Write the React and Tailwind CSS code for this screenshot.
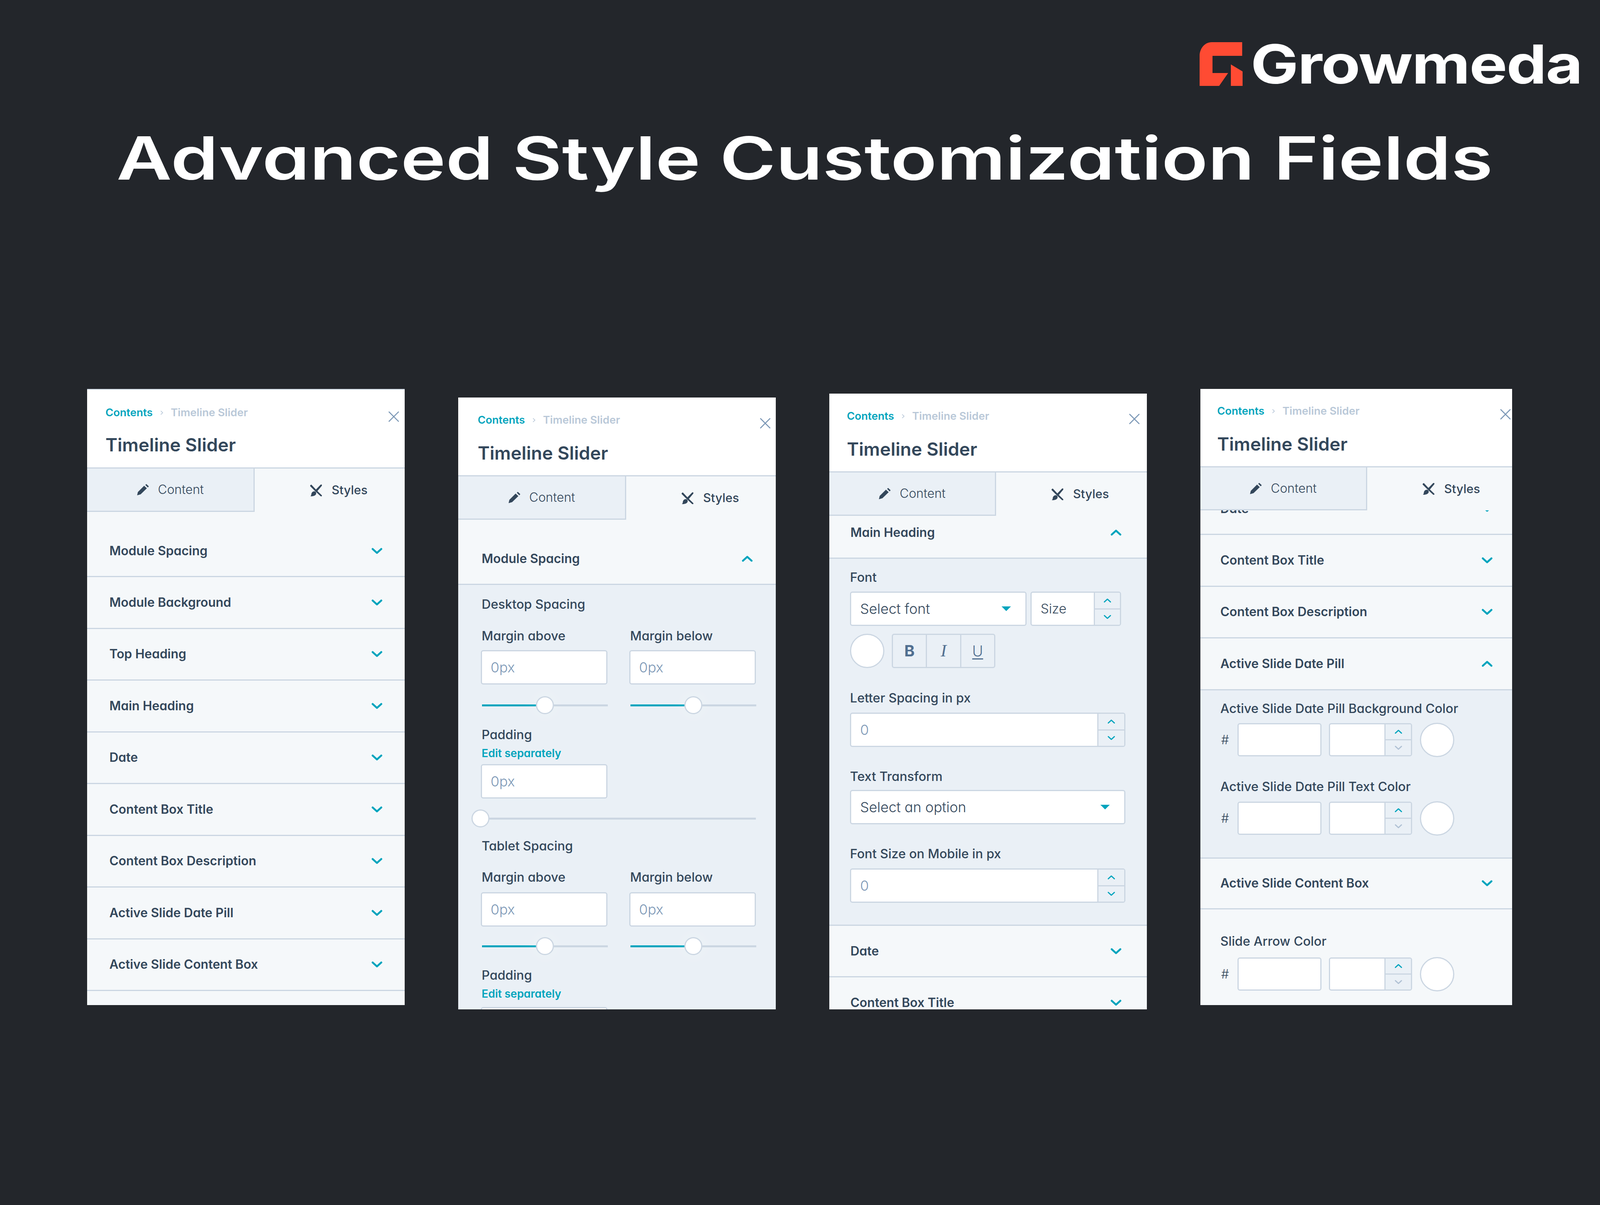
import React from "react";

const C = "[font-feature-settings:'cv11'] font-['Inter',sans-serif]";

function Chevron({ up = false, small = false, gray = false, className = "" }) {
  return (
    <svg
      viewBox="0 0 28 16"
      className={(small ? "w-[20px] h-[12px] " : "w-[28px] h-[16px] ") + className}
      fill="none"
      stroke={gray ? "#b0c1d4" : "#00a4bd"}
      strokeWidth={small ? 4 : 5}
      strokeLinecap="round"
      strokeLinejoin="round"
    >
      <polyline points={up ? "3,13 14,3 25,13" : "3,3 14,13 25,3"} />
    </svg>
  );
}

function Caret() {
  return (
    <svg viewBox="0 0 24 12" className="w-[24px] h-[12px]">
      <polygon points="0,0 24,0 12,12" fill="#00a4bd" />
    </svg>
  );
}

function Pencil() {
  return (
    <svg viewBox="0 0 32 30" className="w-[32px] h-[30px]" fill="#33475b">
      <path d="M1 29.500l2-8.500L19 5l7 6.500L10 27z" />
      <path d="M22 3l2.500-2.500L31 6.500l-2.500 3z" />
    </svg>
  );
}

function Cross() {
  return (
    <svg viewBox="0 0 32 32" className="w-[32px] h-[32px]" fill="#33475b">
      <path d="M1 3l3-2 14 15 13 12.500V31h-3L15 19 1 5z" />
      <path d="M28 1h3v3L17.500 20l-4-4z" />
      <path d="M10 18.500c3.500-1 7 1.500 6.500 5.500-.5 5-7.500 7.500-15 7 3-2 2-5 3-7.500 1-3 3-4.500 5.500-5z" />
    </svg>
  );
}

function Close({ pos }) {
  return (
    <svg viewBox="0 0 28 28" className={"absolute w-[28px] h-[28px] " + pos} fill="none" stroke="#7c98b6" strokeWidth="2.500" strokeLinecap="round">
      <path d="M2 2l24 24M26 2L2 26" />
    </svg>
  );
}

function Header({ hx, closePos, box, titleMt }) {
  return (
    <div className={"relative shrink-0 bg-white border-b-[3px] border-[#cbd6e2] " + hx + " " + box}>
      <div className="flex items-center h-[40px] text-[27.500px] font-semibold">
        <span className="text-[#00a4bd]">Contents</span>
        <svg viewBox="0 0 10 16" className="w-[8px] h-[14px] mx-[19px]" fill="none" stroke="#b0c1d4" strokeWidth="2"><path d="M2 2l6 6-6 6" /></svg>
        <span className="text-[#b9c8d8]">Timeline Slider</span>
      </div>
      <div className={"h-[60px] leading-[60px] text-[46.500px] font-semibold text-[#33475b] " + titleMt}>Timeline Slider</div>
      <Close pos={closePos} />
    </div>
  );
}

function Tabs({ w, h = "h-[111px]" }) {
  return (
    <div className={"flex shrink-0 bg-[#f5f8fa] " + h}>
      <div className={"flex items-center justify-center gap-[22px] bg-[#eaf0f6] border-r-[3px] border-b-[3px] border-[#cbd6e2] " + w}>
        <Pencil />
        <span className="text-[32px] font-light text-[#33475b]">Content</span>
      </div>
      <div className="flex items-center gap-[24px] pl-[141px]">
        <Cross />
        <span className="text-[31px] font-medium text-[#33475b]">Styles</span>
      </div>
    </div>
  );
}

function Row({ text, up = false, px, extra = "h-[132.500px]" }) {
  return (
    <div className={"flex items-center justify-between shrink-0 border-b-[3px] border-[#cbd6e2] bg-[#f5f8fa] " + px + " " + extra}>
      <span className="text-[32px] font-semibold text-[#33475b]">{text}</span>
      <Chevron up={up} />
    </div>
  );
}

function Label({ children, className = "" }) {
  return <div className={"h-[40px] leading-[40px] text-[32.500px] font-medium text-[#33475b] whitespace-nowrap " + className}>{children}</div>;
}

function Edit({ className = "" }) {
  return <div className={"h-[30px] leading-[30px] text-[28px] font-semibold text-[#00a4bd] " + className}>Edit separately</div>;
}

function PxInput({ className = "" }) {
  return (
    <div className={"flex items-center h-[88px] w-[324px] rounded-[6px] border-[3px] border-[#cbd6e2] bg-white pl-[22px] text-[36px] font-light text-[#7c98b6] " + className}>
      0px
    </div>
  );
}

function Slider({ className = "" }) {
  return (
    <div className={"flex items-center h-[46px] w-[322px] ml-[3px] " + className}>
      <div className="w-[138px] h-[5px] bg-[#00a4bd]" />
      <div className="w-[46px] h-[46px] rounded-full bg-white border-[3px] border-[#cbd6e2] shadow-[0_0_40px_14px_rgba(255,255,255,0.14)] shrink-0" />
      <div className="flex-1 h-[5px] bg-[#cbd6e2]" />
    </div>
  );
}

function ZeroSlider({ className = "" }) {
  return (
    <div className={"flex items-center h-[46px] -ml-[26px] " + className}>
      <div className="w-[46px] h-[46px] rounded-full bg-white border-[3px] border-[#cbd6e2] shrink-0" />
      <div className="flex-1 h-[5px] bg-[#cbd6e2]" />
    </div>
  );
}

function Spin({ w = "w-[67px]", gray = false }) {
  return (
    <div className={"flex flex-col h-full border-l-[3px] border-[#cbd6e2] " + w}>
      <div className="flex-1 flex items-center justify-center bg-[#eaf0f6] border-b-[3px] border-[#cbd6e2]">
        <Chevron up small />
      </div>
      <div className="flex-1 flex items-center justify-center bg-[#eaf0f6]">
        <Chevron small gray={gray} />
      </div>
    </div>
  );
}

function Select({ text, className }) {
  return (
    <div className={"flex items-center justify-between h-[88px] rounded-[6px] border-[3px] border-[#cbd6e2] bg-white pl-[23px] text-[36px] font-light text-[#33475b] " + className}>
      <span>{text}</span>
      <Caret />
    </div>
  );
}

function NumberInput({ className }) {
  return (
    <div className={"flex items-center h-[88px] w-[705px] rounded-[6px] border-[3px] border-[#cbd6e2] bg-white overflow-hidden " + className}>
      <span className="flex-1 pl-[23px] text-[36px] font-light text-[#7c98b6]">0</span>
      <Spin w="w-[69px]" />
    </div>
  );
}

function ColorRow({ className = "" }) {
  return (
    <div className={"flex items-center h-[88px] " + className}>
      <span className="w-[44px] pl-[2px] text-[32px] font-light text-[#33475b]">#</span>
      <div className="w-[215px] h-[85px] rounded-[6px] border-[3px] border-[#cbd6e2] bg-white" />
      <div className="ml-[19px] flex w-[213px] h-[85px] rounded-[6px] border-[3px] border-[#cbd6e2] bg-white overflow-hidden justify-end">
        <Spin w="w-[68px]" gray />
      </div>
      <div className="ml-[20px] w-[88px] h-[88px] rounded-full border-[3px] border-[#cbd6e2] bg-white" />
    </div>
  );
}

function Panel({ className, children }) {
  return <div className={"flex flex-col shrink-0 overflow-hidden bg-[#f5f8fa] " + C + " " + className}>{children}</div>;
}

const list1 = ["Top Heading", "Main Heading", "Date", "Content Box Title", "Content Box Description", "Active Slide Date Pill", "Active Slide Content Box"];

export default function App() {
  return (
    <div className="flex flex-col w-[4114px] h-[3086px] overflow-hidden bg-[#23262b]">
      <div className="flex justify-end items-center pt-[108px] pr-[64px] h-[220px]">
        <svg viewBox="0 0 110 112" className="w-[110px] h-[112px] mr-[153px]" fill="#ff4b33">
          <path d="M31 0H109V35H33V79H73L50 112H0V32C2 14 14 0 31 0Z" />
          <path d="M80 57L110 75V112H80Z" />
        </svg>
        <span className="font-['Inter',sans-serif] text-[138px] leading-[112px] font-bold tracking-[-2px] text-white origin-right scale-x-[1.185]">Growmeda</span>
      </div>
      <div className={"pl-[298px] mt-[90px] h-[190px] leading-[190px] text-[152px] font-semibold text-white whitespace-nowrap " + C}>
        <span className="inline-block origin-left scale-x-[1.283]">Advanced Style Customization Fields</span>
      </div>
      <div className="flex items-start gap-[137px] pl-[223px] mt-[496px]">
        {/* Panel 1 */}
        <Panel className="w-[813px] h-[1578px] border-t-[2px] border-[#cbd6e2]">
          <Header hx="pl-[47px]" box="h-[202px] pt-[39px]" titleMt="mt-[32px]" closePos="right-[14px] top-[55px]" />
          <Tabs w="w-[429px]" />
          <Row text="Module Spacing" px="px-[57px]" extra="h-[167px] pt-[36px]" />
          <Row text="Module Background" px="px-[57px]" />
          {list1.map((t) => (
            <Row key={t} text={t} px="px-[57px]" />
          ))}
        </Panel>

        {/* Panel 2 */}
        <Panel className="w-[813px] h-[1567px] mt-[22px]">
          <Header hx="pl-[50px]" box="h-[202px] pt-[38px]" titleMt="mt-[34px]" closePos="right-[13px] top-[52px]" />
          <Tabs w="w-[430px]" />
          <Row text="Module Spacing" up px="pl-[60px] pr-[59px]" extra="h-[167px] pt-[36px]" />
          <div className="flex-1 bg-[#eaf0f6] px-[60px] pt-[30px]">
            <Label>Desktop Spacing</Label>
            <div className="flex gap-[55px] -ml-[2px]">
              <div>
                <Label className="mt-[41px] ml-[2px]">Margin above</Label>
                <PxInput className="mt-[16px]" />
                <Slider className="mt-[30px]" />
              </div>
              <div>
                <Label className="mt-[41px] ml-[2px]">Margin below</Label>
                <PxInput className="mt-[16px]" />
                <Slider className="mt-[30px]" />
              </div>
            </div>
            <Label className="mt-[33px]">Padding</Label>
            <Edit className="mt-[12px]" />
            <PxInput className="mt-[13px] -ml-[2px]" />
            <ZeroSlider className="mt-[28px] mr-[-9px]" />
            <Label className="mt-[28px]">Tablet Spacing</Label>
            <div className="flex gap-[55px] -ml-[2px]">
              <div>
                <Label className="mt-[40px] ml-[2px]">Margin above</Label>
                <PxInput className="mt-[18px]" />
                <Slider className="mt-[27px]" />
              </div>
              <div>
                <Label className="mt-[40px] ml-[2px]">Margin below</Label>
                <PxInput className="mt-[18px]" />
                <Slider className="mt-[27px]" />
              </div>
            </div>
            <Label className="mt-[32px]">Padding</Label>
            <Edit className="mt-[12px]" />
            <PxInput className="mt-[19px] -ml-[2px]" />
          </div>
        </Panel>

        {/* Panel 3 */}
        <Panel className="w-[813px] h-[1577px] mt-[12px]">
          <Header hx="pl-[45px]" box="h-[202px] pt-[38px]" titleMt="mt-[34px]" closePos="right-[18px] top-[51px]" />
          <Tabs w="w-[427px]" />
          <Row text="Main Heading" up px="pl-[54px] pr-[65px]" extra="h-[110px] pb-[22px]" />
          <div className="bg-[#eaf0f6] px-[53px] pt-[28px] pb-[56px] border-b-[3px] border-[#cbd6e2]">
            <Label>Font</Label>
            <div className="flex gap-[10px] mt-[16px]">
              <Select text="Select font" className="w-[452px] pr-[37px]" />
              <div className="flex items-center w-[232px] h-[88px] rounded-[6px] border-[3px] border-[#cbd6e2] bg-white overflow-hidden">
                <span className="flex-1 pl-[23px] text-[33.500px] font-light text-[#33475b]">Size</span>
                <Spin />
              </div>
            </div>
            <div className="flex items-center gap-[19px] mt-[20px]">
              <div className="w-[88px] h-[88px] rounded-full bg-white border-[3px] border-[#cbd6e2]" />
              <div className="flex w-[265px] h-[88px] rounded-[6px] border-[3px] border-[#cbd6e2] text-[#516f90]">
                <div className="flex-1 flex items-center justify-center text-[40px] font-bold border-r-[3px] border-[#cbd6e2]">B</div>
                <div className="flex-1 flex items-center justify-center text-[44px] italic font-['Liberation_Serif',serif] border-r-[3px] border-[#cbd6e2]">I</div>
                <div className="flex-1 flex items-center justify-center text-[38px] font-light underline underline-offset-[5px]">U</div>
              </div>
            </div>
            <Label className="mt-[57px]">Letter Spacing in px</Label>
            <NumberInput className="mt-[17px]" />
            <Label className="mt-[56px]">Text Transform</Label>
            <Select text="Select an option" className="w-[705px] mt-[14px] pr-[37px]" />
            <Label className="mt-[56px]">Font Size on Mobile in px</Label>
            <NumberInput className="mt-[17px]" />
          </div>
          <Row text="Date" px="pl-[54px] pr-[65px]" extra="h-[132px]" />
          <Row text="Content Box Title" px="pl-[54px] pr-[65px]" />
        </Panel>

        {/* Panel 4 */}
        <Panel className="w-[798px] h-[1578px]">
          <Header hx="pl-[43px]" box="h-[201px] pt-[37px]" titleMt="mt-[34px]" closePos="right-[3px] top-[51px]" />
          <Tabs w="w-[427px]" h="h-[110px]" />
          <div className="flex flex-col flex-1 overflow-hidden">
            <Row text="Date" px="pl-[51px] pr-[50px]" extra="h-[132px] -mt-[69px]" />
            <Row text="Content Box Title" px="pl-[51px] pr-[50px]" />
            <Row text="Content Box Description" px="pl-[51px] pr-[50px]" />
            <Row text="Active Slide Date Pill" up px="pl-[51px] pr-[50px]" />
            <div className="bg-[#eaf0f6] pl-[51px] pt-[27px] pb-[56px] border-b-[3px] border-[#cbd6e2]">
              <Label>Active Slide Date Pill Background Color</Label>
              <ColorRow className="mt-[16px]" />
              <Label className="mt-[56px]">Active Slide Date Pill Text Color</Label>
              <ColorRow className="mt-[17px]" />
            </div>
            <Row text="Active Slide Content Box" px="pl-[51px] pr-[50px]" extra="h-[130px]" />
            <div className="pl-[51px] pt-[62px]">
              <Label>Slide Arrow Color</Label>
              <ColorRow className="mt-[20px]" />
            </div>
          </div>
        </Panel>
      </div>
    </div>
  );
}
